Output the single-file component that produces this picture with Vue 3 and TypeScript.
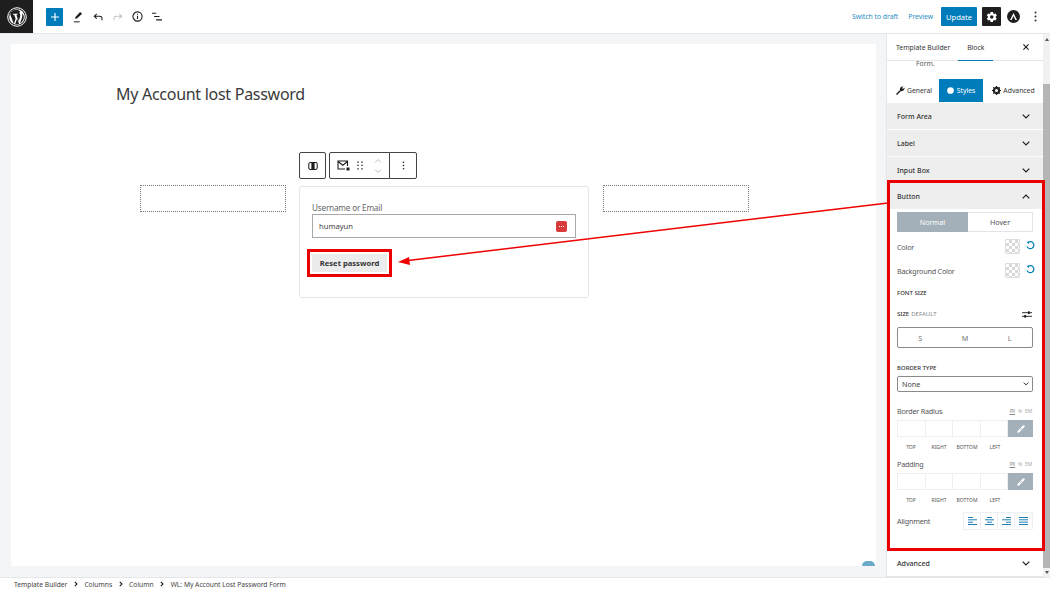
<script setup lang="ts">
const crumbs: string[] = ['Template Builder', 'Columns', 'Column', 'WL: My Account Lost Password Form']
const sides: string[] = ['TOP', 'RIGHT', 'BOTTOM', 'LEFT']
const closedTop: string[] = ['Form Area', 'Label', 'Input Box']
const aligns = [
  'M1 1.500h5M1 3.800h9M1 6.200h5M1 8.500h9',
  'M3 1.500h5M1 3.800h9M3 6.200h5M1 8.500h9',
  'M5 1.500h5M1 3.800h9M5 6.200h5M1 8.500h9',
  'M1 1.500h9M1 3.800h9M1 6.200h9M1 8.500h9',
]
</script>

<template>
  <div class="app">
    <header class="top">
      <div class="wp">
        <svg width="20" height="20" viewBox="0 0 22 22">
          <circle cx="11" cy="11" r="10.200" fill="none" stroke="#fff" stroke-width="1.100" />
          <circle cx="11" cy="11" r="8.600" fill="#fff" />
          <path d="M3.600 8.200 7.500 18.600l2-5.600-1.600-4.600H6.600V7.400h5v1h-1.300l2.500 7.300 1.600-4.900c.5-1.600 0-3.200-.6-3.900-.3-.5 0-1.600 1-1.600L12 3 7 3.600 4 6Z" fill="#1e1e1e" />
          <path d="M11.200 12.600 9 18.700c1.400.4 2.900.3 4.300-.1Z" fill="#1e1e1e" />
          <path d="M16.600 7c.6 2 .3 3.800-.3 5.400l-2 5.600c2.600-1.500 4.200-4.200 4.200-7 0-1.500-.7-3-1.900-4Z" fill="#1e1e1e" />
        </svg>
      </div>
      <button class="plus">
        <svg width="8" height="8" viewBox="0 0 9 9"><path d="M4.500 0v9M0 4.500h9" stroke="#fff" stroke-width="1.300" /></svg>
      </button>
      <svg class="ti pen" width="10" height="12" viewBox="0 0 12 14">
        <path d="M8.500 1 11 3 5 8.500 2.500 9.500 3 7Z" fill="#1e1e1e" /><path d="M1 12.800h7" stroke="#1e1e1e" stroke-width="1.200" />
      </svg>
      <svg class="ti undo" width="10" height="8" viewBox="0 0 12 10">
        <path d="M4.500 1 1.300 4l3.200 3M1.500 4H8c2 0 3 1.200 3 3v2" fill="none" stroke="#1e1e1e" stroke-width="1.300" />
      </svg>
      <svg class="ti redo" width="10" height="8" viewBox="0 0 12 10">
        <path d="M7.500 1 10.700 4 7.500 7M10.500 4H4C2 4 1 5.200 1 7v2" fill="none" stroke="#c4c4c4" stroke-width="1.300" />
      </svg>
      <svg class="ti info" width="11" height="11" viewBox="0 0 12 12">
        <circle cx="6" cy="6" r="5" fill="none" stroke="#1e1e1e" stroke-width="1.200" /><path d="M6 5.200v3.600M6 3v1.200" stroke="#1e1e1e" stroke-width="1.200" />
      </svg>
      <svg class="ti list" width="10" height="9" viewBox="0 0 12 10">
        <path d="M0 1h5M2.500 5H9M5 9h7" stroke="#1e1e1e" stroke-width="1.300" />
      </svg>
      <div class="top-right">
        <a class="link draft">Switch to draft</a>
        <a class="link preview">Preview</a>
        <button class="update">Update</button>
        <button class="gear">
          <svg width="12" height="12" viewBox="0 0 24 24"><path fill="#fff" d="M19.400 13c.1-.3.1-.7.100-1s0-.7-.1-1l2.100-1.600c.2-.1.200-.4.100-.6l-2-3.500c-.1-.2-.4-.3-.6-.2l-2.500 1a7 7 0 0 0-1.700-1L14 2.400c0-.2-.2-.4-.5-.4h-4c-.2 0-.4.200-.5.400l-.4 2.700a7 7 0 0 0-1.700 1l-2.500-1c-.2-.1-.5 0-.6.200l-2 3.500c-.1.200-.1.500.1.600L4 11c0 .3-.1.700-.1 1s0 .7.100 1l-2.100 1.600c-.2.100-.2.400-.1.600l2 3.500c.1.200.4.300.6.200l2.500-1c.5.400 1.100.7 1.700 1l.4 2.700c0 .2.300.4.500.4h4c.3 0 .5-.2.500-.4l.4-2.700c.6-.3 1.200-.6 1.700-1l2.500 1c.2.100.5 0 .6-.2l2-3.500c.1-.2.100-.5-.1-.6ZM11.500 15.500a3.500 3.500 0 1 1 0-7 3.500 3.500 0 0 1 0 7Z" /></svg>
        </button>
        <svg class="astra" width="13" height="13" viewBox="0 0 13 13">
          <circle cx="6.500" cy="6.500" r="6.500" fill="#1e1e1e" /><path d="M3 10 6.500 3 10 10 8.400 10 6.500 6 4.600 10Z" fill="#fff" />
        </svg>
        <svg class="dots" width="3" height="11" viewBox="0 0 3 11">
          <circle cx="1.500" cy="1.500" r="1" fill="#333" /><circle cx="1.500" cy="5.500" r="1" fill="#333" /><circle cx="1.500" cy="9.500" r="1" fill="#333" />
        </svg>
      </div>
    </header>

    <div class="main">
      <section class="canvas">
        <div class="page">
          <h1 class="title">My Account lost Password</h1>
          <div class="columns">
            <div class="placeholder"></div>
            <div class="middle">
              <div class="toolbar">
                <div class="tb tb-one">
                  <svg width="10" height="8" viewBox="0 0 12 10"><rect x=".7" y=".7" width="10.600" height="8.600" rx="2" fill="none" stroke="#1e1e1e" stroke-width="1.300" /><rect x="4" y="1" width="4" height="8" fill="#1e1e1e" /></svg>
                </div>
                <div class="tb tb-two">
                  <svg width="13" height="11" viewBox="0 0 13 11"><path d="M10.500 6V1H1v8h7M1 1.500l4.800 3.800 4.700-3.800" fill="none" stroke="#1e1e1e" stroke-width="1.100" /><rect x="9.500" y="7.500" width="3" height="3" fill="#1e1e1e" /></svg>
                  <svg class="drag" width="6" height="9" viewBox="0 0 6 9"><path d="M0 .5h2v1.300H0ZM4 .5h2v1.300H4ZM0 3.800h2v1.300H0ZM4 3.800h2v1.300H4ZM0 7.200h2v1.300H0ZM4 7.200h2v1.300H4Z" fill="#666" /></svg>
                  <svg class="mover" width="8" height="16" viewBox="0 0 8 16"><path d="M1 4.500 4 1.500l3 3M1 11.500l3 3 3-3" fill="none" stroke="#bbb" stroke-width="1" /></svg>
                </div>
                <div class="tb tb-three">
                  <svg width="3" height="9" viewBox="0 0 3 11"><circle cx="1.500" cy="1.500" r="1" fill="#1e1e1e" /><circle cx="1.500" cy="5.500" r="1" fill="#1e1e1e" /><circle cx="1.500" cy="9.500" r="1" fill="#1e1e1e" /></svg>
                </div>
              </div>
              <div class="form">
                <label class="flabel">Username or Email</label>
                <div class="finput">
                  <span>humayun</span>
                  <span class="pwd"><i></i><i></i><i></i></span>
                </div>
                <div class="reset-frame"><button class="reset">Reset password</button></div>
              </div>
            </div>
            <div class="placeholder"></div>
          </div>
        </div>
        <span class="help"></span>
      </section>

      <aside class="side">
        <div class="side-inner">
          <div class="side-head">
            <span class="sh-tab">Template Builder</span>
            <span class="sh-tab active">Block</span>
            <svg class="close" width="6" height="6" viewBox="0 0 7 7"><path d="M.5.500l6 6M6.500.500l-6 6" stroke="#1e1e1e" stroke-width="1.300" /></svg>
          </div>
          <div class="form-note">Form.</div>
          <div class="tabs">
            <span class="tab">
              <svg width="9" height="9" viewBox="0 0 9 9"><path d="M0 8 4 4C3.500 2 5 0 7.500.500L6 2l1 1 1.500-1.500C9 4 7 5.500 5 5L1 9Z" fill="#1e1e1e" /></svg>General
            </span>
            <span class="tab on">
              <svg width="7" height="7" viewBox="0 0 9 9"><circle cx="4.500" cy="4.500" r="4.300" fill="#fff" /></svg>Styles
            </span>
            <span class="tab">
              <svg width="9" height="9" viewBox="0 0 9 9"><circle cx="4.500" cy="4.500" r="2.800" fill="none" stroke="#1e1e1e" stroke-width="1.800" /><path d="M4.500 0v9M0 4.500h9M1.300 1.300l6.400 6.400M7.700 1.300 1.300 7.700" stroke="#1e1e1e" stroke-width="1.200" /><circle cx="4.500" cy="4.500" r="1.500" fill="#fff" /></svg>Advanced
            </span>
          </div>
          <div v-for="t in closedTop" :key="t" class="acc">
            <span>{{ t }}</span>
            <svg width="8" height="5" viewBox="0 0 8 5"><path d="M.7.700 4 4 7.300.700" fill="none" stroke="#1e1e1e" stroke-width="1.200" /></svg>
          </div>
          <div class="acc open">
            <span>Button</span>
            <svg width="8" height="5" viewBox="0 0 8 5"><path d="M.7 4.300 4 1l3.300 3.300" fill="none" stroke="#1e1e1e" stroke-width="1.200" /></svg>
          </div>
          <div class="panel">
            <div class="seg">
              <span class="seg-on">Normal</span>
              <span>Hover</span>
            </div>
            <div class="crow">
              <span>Color</span>
              <span class="swatch"></span>
              <svg class="rst" width="9" height="9" viewBox="0 0 10 10"><path d="M2.200 1.800A3.900 3.900 0 1 1 1.200 6" fill="none" stroke="#007cba" stroke-width="1.300" /><path d="M.6 .8h2.800v2.800Z" fill="#007cba" /></svg>
            </div>
            <div class="crow second">
              <span>Background Color</span>
              <span class="swatch"></span>
              <svg class="rst" width="9" height="9" viewBox="0 0 10 10"><path d="M2.200 1.800A3.900 3.900 0 1 1 1.200 6" fill="none" stroke="#007cba" stroke-width="1.300" /><path d="M.6 .8h2.800v2.800Z" fill="#007cba" /></svg>
            </div>
            <div class="caps fs">FONT SIZE</div>
            <div class="size-row">
              <span class="caps">SIZE</span><span class="default">DEFAULT</span>
              <svg class="slid" width="10" height="9" viewBox="0 0 11 9"><path d="M0 2.500h11M0 6.500h11" stroke="#1e1e1e" stroke-width="1" /><rect x="6.500" y="1" width="2" height="3" fill="#1e1e1e" /><rect x="2.500" y="5" width="2" height="3" fill="#1e1e1e" /></svg>
            </div>
            <div class="sizes"><span>S</span><span>M</span><span>L</span></div>
            <div class="caps bt">BORDER TYPE</div>
            <div class="select">
              <span>None</span>
              <svg width="6" height="4" viewBox="0 0 7 5"><path d="M.7.800 3.500 3.600 6.300.800" fill="none" stroke="#1e1e1e" stroke-width="1.200" /></svg>
            </div>
            <template v-for="(name, i) in ['Border Radius', 'Padding']" :key="name">
              <div class="unit-head" :class="{ pad: i === 1 }">
                <span>{{ name }}</span>
                <span class="units"><u>PX</u><span>%</span><span>EM</span></span>
              </div>
              <div class="dims">
                <span class="dim"></span><span class="dim"></span><span class="dim"></span><span class="dim"></span>
                <span class="dim link-btn">
                  <svg width="8" height="8" viewBox="0 0 9 9"><path d="M1.500 7.500 7.500 1.500" stroke="#fff" stroke-width="2.400" stroke-linecap="round" /><path d="M3.500 5.500 5.500 3.500" stroke="#a3afb9" stroke-width=".8" /></svg>
                </span>
              </div>
              <div class="dim-labels"><span v-for="s in sides" :key="s">{{ s }}</span></div>
            </template>
            <div class="align-row">
              <span>Alignment</span>
              <div class="aligns">
                <span v-for="(a, i) in aligns" :key="i" class="al">
                  <svg width="11" height="10" viewBox="0 0 11 10"><path :d="a" stroke="#1f7fb4" stroke-width="1" fill="none" /></svg>
                </span>
              </div>
            </div>
          </div>
          <div class="acc last">
            <span>Advanced</span>
            <svg width="8" height="5" viewBox="0 0 8 5"><path d="M.7.700 4 4 7.300.700" fill="none" stroke="#1e1e1e" stroke-width="1.200" /></svg>
          </div>
        </div>
        <div class="scroll">
          <span class="sc-up"></span>
          <span class="thumb"></span>
          <span class="sc-down"></span>
        </div>
      </aside>
    </div>

    <footer class="crumbs">
      <template v-for="(c, i) in crumbs" :key="c">
        <span>{{ c }}</span>
        <svg v-if="i < crumbs.length - 1" width="4" height="6" viewBox="0 0 4 6"><path d="M.8.800 3 3 .8 5.200" fill="none" stroke="#1e1e1e" stroke-width="1.100" /></svg>
      </template>
    </footer>

    <div class="callout-side"></div>
    <svg class="arrow" width="1050" height="590" viewBox="0 0 1050 590">
      <path d="M888 203 408 260.500" stroke="#f00000" stroke-width="1.500" />
      <path d="M398 262 409 257 410 265Z" fill="#f00000" />
    </svg>
  </div>
</template>

<style>
html, body { margin: 0; background: #fff; }
</style>

<style scoped>
* { box-sizing: border-box; }
.app {
  position: relative;
  width: 1050px;
  height: 590px;
  overflow: hidden;
  background: #fff;
  color: #1e1e1e;
  font-family: "Noto Sans", "Open Sans", sans-serif;
  font-size: 8px;
}
button { font-family: inherit; border: 0; padding: 0; }
svg { display: block; flex: none; }

.top {
  height: 34px;
  display: flex;
  align-items: center;
  border-bottom: 1px solid #e4e6e8;
}
.wp {
  width: 33px;
  height: 33px;
  background: #1e1e1e;
  display: flex;
  align-items: center;
  justify-content: center;
}
.plus {
  width: 17px;
  height: 18px;
  margin-left: 13px;
  border-radius: 1px;
  background: #007cba;
  display: flex;
  align-items: center;
  justify-content: center;
}
.ti { margin-left: 10px; }
.info { margin-left: 9px; }
.list { margin-left: 9px; }
.top-right {
  margin-left: auto;
  display: flex;
  align-items: center;
}
.link { color: #2a8bc0; font-size: 6.800px; }
.preview { margin-left: 10px; }
.update {
  margin-left: 8px;
  width: 36px;
  height: 19px;
  background: #007cba;
  color: #fff;
  font-size: 7.600px;
  border-radius: 1px;
}
.gear {
  margin-left: 5px;
  width: 19px;
  height: 19px;
  background: #1e1e1e;
  border-radius: 1px;
  display: flex;
  align-items: center;
  justify-content: center;
}
.astra { margin-left: 6px; }
.dots { margin-left: 14px; margin-right: 13px; }

.main { display: flex; height: 543px; }
.canvas {
  position: relative;
  width: 887px;
  background: #f3f5f6;
  padding: 10px 10px 10px 11px;
  border-right: 1px solid #e4e6e8;
}
.page {
  height: 522px;
  background: #fff;
  padding: 39px 120px 0 105px;
}
.title {
  margin: 0;
  font-size: 16px;
  font-weight: 400;
  line-height: 23px;
  color: #3a3a3a;
  letter-spacing: -.28px;
}
.columns {
  margin-top: 46px;
  margin-left: 24px;
  display: flex;
  gap: 13px;
  align-items: flex-start;
}
.placeholder {
  width: 146px;
  height: 27px;
  margin-top: 33px;
  border: 1px dotted #777;
}
.placeholder:last-child { margin-left: 1px; }
.middle { width: 290px; }
.toolbar { display: flex; height: 27px; }
.tb {
  height: 27px;
  background: #fff;
  border: 1px solid #444;
  border-radius: 2px;
  display: flex;
  align-items: center;
  justify-content: center;
}
.tb-one { width: 27px; margin-right: 3px; }
.tb-two {
  width: 61px;
  justify-content: flex-start;
  padding-left: 7px;
  border-radius: 2px 0 0 2px;
}
.drag { margin-left: 7px; }
.mover { margin-left: 11px; }
.tb-three {
  width: 28px;
  margin-left: -1px;
  border-radius: 0 2px 2px 0;
}
.form {
  margin-top: 7px;
  height: 112px;
  border: 1px solid #e2e4e7;
  border-radius: 3px;
  padding: 14px 12px 0;
}
.flabel {
  display: block;
  font-size: 8.200px;
  letter-spacing: -.2px;
  line-height: 13px;
  color: #666;
}
.finput {
  margin-top: 0;
  height: 24px;
  border: 1px solid #a8a8a8;
  display: flex;
  align-items: center;
  justify-content: space-between;
  padding: 0 8px 0 6px;
  font-size: 7.600px;
  color: #444;
}
.pwd {
  width: 11px;
  height: 11px;
  border-radius: 2px;
  background: #d93a3a;
  display: flex;
  align-items: center;
  justify-content: center;
  gap: 1px;
}
.pwd i { width: 1px; height: 1px; background: #fff; }
.reset-frame {
  width: 85px;
  height: 28px;
  margin: 11px 0 0 -5px;
  border: 3px solid #ea0000;
  padding: 2px;
}
.reset {
  display: block;
  width: 100%;
  height: 18px;
  background: #ececec;
  color: #333;
  font-size: 7.600px;
  font-weight: 700;
  border-radius: 1px;
}
.help {
  position: absolute;
  left: 862px;
  top: 527px;
  width: 13px;
  height: 5px;
  background: #6aa9c8;
  border-radius: 7px 7px 0 0;
}

.side {
  position: relative;
  width: 163px;
  height: 543px;
  display: flex;
  overflow: hidden;
}
.side-inner { width: 156px; flex: none; }
.side-head {
  height: 27px;
  display: flex;
  align-items: stretch;
  border-bottom: 1px solid #e4e6e8;
  font-size: 6.800px;
  color: #333;
}
.sh-tab {
  display: flex;
  align-items: center;
  padding: 0 8px 0 9px;
}
.sh-tab.active {
  width: 35px;
  padding: 0;
  justify-content: center;
  border-bottom: 1px solid #007cba;
  margin-bottom: -1px;
}
.close { margin: 10px 14px 0 auto; }
.form-note { height: 19px; padding-left: 29px; font-size: 6.800px; line-height: 8px; margin-top: -1px; color: #555; }
.tabs {
  display: flex;
  height: 23px;
  margin-bottom: 1px;
  font-size: 6.800px;
}
.tab {
  display: flex;
  align-items: center;
  justify-content: center;
  gap: 2px;
  width: 50px;
  color: #333;
  padding-left: 2px;
}
.tab:first-child { width: 52px; }
.tab.on { width: 44px; padding: 0; background: #007cba; color: #fff; gap: 3px; }
.tab:last-child { width: 59px; }
.acc {
  height: 26px;
  margin-bottom: 1px;
  background: #eeeeee;
  display: flex;
  align-items: center;
  justify-content: space-between;
  padding: 0 13px 0 10px;
  font-size: 7px;
  font-weight: 500;
  color: #333;
}
.acc:nth-child(6) { margin-bottom: 0; }
.acc.open { margin-bottom: 0; }
.panel {
  height: 341px;
  padding: 3px 10px 0;
}
.seg {
  display: flex;
  height: 20px;
  border: 1px solid #e2e4e7;
  font-size: 7.200px;
  color: #555;
}
.seg span { flex: 1; display: flex; align-items: center; justify-content: center; }
.seg .seg-on { background: #a3afb9; color: #fff; flex: none; width: 71px; margin: -1px 0 -1px -1px; }
.crow {
  display: flex;
  align-items: center;
  height: 15px;
  margin-top: 7px;
  font-size: 7.200px;
  letter-spacing: -.2px;
  color: #555;
}
.crow.second { margin-top: 9px; }
.swatch {
  margin-left: auto;
  width: 15px;
  height: 15px;
  border: 1px solid #ddd;
  border-radius: 1px;
  background-color: #fff;
  background-image:
    linear-gradient(45deg, #d8d8d8 25%, transparent 25%, transparent 75%, #d8d8d8 75%),
    linear-gradient(45deg, #d8d8d8 25%, transparent 25%, transparent 75%, #d8d8d8 75%);
  background-size: 6px 6px;
  background-position: 0 0, 3px 3px;
}
.rst { margin: -3px -2px 0 6px; }
.caps { font-size: 6px; font-weight: 500; color: #333; }
.fs { margin-top: 11px; line-height: 8px; }
.size-row {
  display: flex;
  align-items: center;
  height: 10px;
  margin-top: 12px;
}
.default { font-size: 6px; color: #888; margin-left: 2px; }
.slid { margin-left: auto; margin-right: 1px; }
.sizes {
  display: flex;
  height: 21px;
  margin-top: 8px;
  border: 1px solid #8a8a8a;
  border-radius: 2px;
  font-size: 7.200px;
  color: #777;
}
.sizes span { flex: 1; display: flex; align-items: center; justify-content: center; }
.bt { margin-top: 16px; line-height: 8px; }
.select {
  height: 16px;
  margin-top: 4px;
  border: 1px solid #8a8a8a;
  border-radius: 2px;
  display: flex;
  align-items: center;
  justify-content: space-between;
  padding: 0 3px 0 4px;
  font-size: 7.200px;
  color: #444;
}
.unit-head {
  display: flex;
  justify-content: space-between;
  align-items: center;
  height: 10px;
  margin-top: 14px;
  font-size: 7.200px;
  letter-spacing: -.2px;
  color: #555;
}
.unit-head.pad { margin-top: 8px; }
.units { display: flex; gap: 3px; font-size: 5px; color: #aaa; margin-right: 1px; }
.units u { color: #888; }
.dims {
  display: flex;
  height: 17px;
  margin-top: 4px;
  border: 1px solid #eceeef;
}
.dim { flex: 1; border-right: 1px solid #eceeef; }
.dim.link-btn {
  flex: none;
  width: 25px;
  border: 0;
  margin: -1px -1px -1px 0;
  background: #a3afb9;
  display: flex;
  align-items: center;
  justify-content: center;
}
.dim-labels {
  display: flex;
  margin-top: 6px;
  font-size: 5px;
  line-height: 8px;
  color: #555;
}
.dim-labels span { width: 28px; text-align: center; }
.align-row {
  display: flex;
  align-items: center;
  justify-content: space-between;
  margin-top: 8px;
  height: 18px;
  font-size: 7.200px;
  letter-spacing: -.2px;
  color: #555;
}
.aligns { display: flex; border: 1px solid #eceeef; border-radius: 2px; }
.al {
  width: 17px;
  height: 16px;
  display: flex;
  align-items: center;
  justify-content: center;
  border-right: 1px solid #eceeef;
}
.al:last-child { border: 0; }
.acc.last { background: #fff; height: 26px; margin: 1px 0 0; border-bottom: 1px solid #e4e6e8; }

.scroll {
  width: 7px;
  height: 543px;
  background: #f1f1f1;
  display: flex;
  flex-direction: column;
  align-items: center;
}
.thumb { width: 7px; height: 484px; margin-top: 43px; background: #b5b5b5; }
.sc-up { margin-top: 4px; width: 0; height: 0; border: 2.500px solid transparent; border-top: 0; border-bottom: 3px solid #555; }
.sc-down { margin-top: auto; margin-bottom: 3px; width: 0; height: 0; border: 2.500px solid transparent; border-bottom: 0; border-top: 3px solid #555; }

.crumbs {
  height: 13px;
  border-top: 1px solid #e4e6e8;
  padding-left: 14px;
  display: flex;
  align-items: center;
  gap: 6.500px;
  font-size: 6.700px;
  color: #444;
}

.callout-side {
  position: absolute;
  left: 887px;
  top: 180px;
  width: 158px;
  height: 371px;
  border: 3px solid #ea0000;
  pointer-events: none;
}
.arrow { position: absolute; left: 0; top: 0; pointer-events: none; }
</style>
